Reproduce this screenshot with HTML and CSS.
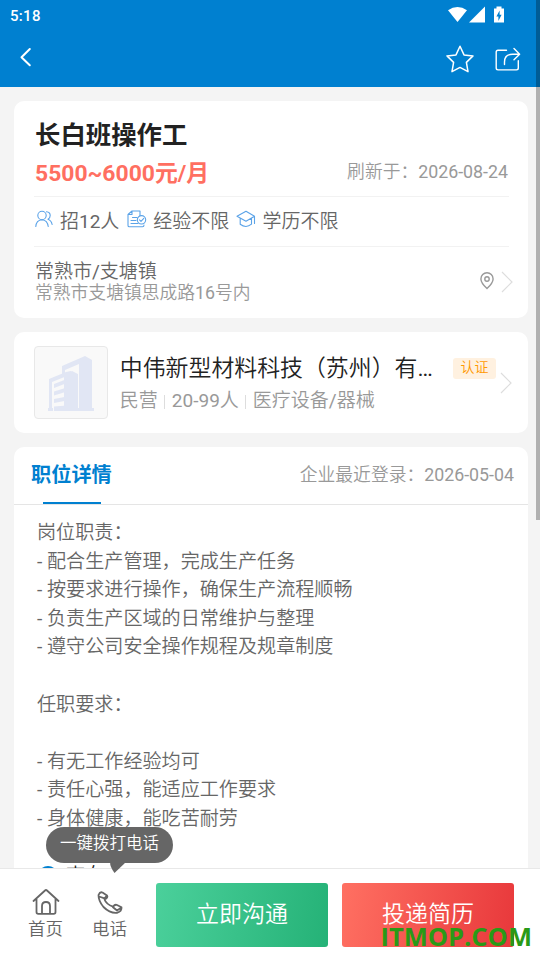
FILE: index.html
```html
<!DOCTYPE html>
<html lang="zh-CN">
<head>
<meta charset="utf-8">
<title>职位详情</title>
<link rel="stylesheet" href="styles.css">
</head>
<body>
<div class="app">
  <header class="header">
    <div class="status">
      <span class="clock">5:18</span>
      <svg class="status-icons" width="58" height="18" viewBox="0 0 58 18" fill="#fff">
        <path d="M0 3.2Q9.500-3.200 19 3.200L9.500 15Z"/>
        <path d="M37 -.5V15.500H21Z"/>
        <path fill-rule="evenodd" d="M48.500-.5h5V1.500H56V15.500H46V1.500h2.500ZM51.600 3.500l-3.200 6h2v4.500l3.200-6.200h-2Z"/>
      </svg>
    </div>
    <div class="nav">
      <svg width="14" height="22" viewBox="0 0 14 22" fill="none" stroke="#fff" stroke-width="2" stroke-linecap="round" stroke-linejoin="round"><path d="M10.800 3L2.500 11.300l8.300 8"/></svg>
      <div class="nav-actions">
        <svg width="28" height="30" viewBox="0 0 28 30" fill="none" stroke="#fff" stroke-width="1.500" stroke-linejoin="round"><path d="M14 2.200l4 8.700 9 1-6.600 6.500 1.600 9.300-8-4.300-8 4.300 1.600-9.300L1 11.900l9-1Z"/></svg>
        <svg width="26" height="26" viewBox="0 0 26 26" fill="none" stroke="#fff" stroke-width="1.400" stroke-linecap="round" stroke-linejoin="round"><path d="M11.500 3.300H3q-1.800 0-1.800 1.800v16q0 1.800 1.800 1.800h18.500q1.800 0 1.800-1.800v-7.300M9.500 17.500V15q0-7.700 8-7.700h7M19 1.500l5.600 5.800-5.600 5.500"/></svg>
      </div>
    </div>
  </header>

  <main class="content">
    <section class="card job">
      <h1 class="job-title">长白班操作工</h1>
      <div class="pay-row"><span class="pay">5500~6000元/月</span><span class="date">刷新于：2026-08-24</span></div>
      <div class="chips">
        <svg width="18" height="18" viewBox="0 0 18 18" class="line-icon"><circle cx="7" cy="5.500" r="4.200"/><path d="M.8 16.500q.4-6.300 6.200-6.800 5.500.5 6.200 6.800M11.500 1.700q3.700.3 3.700 3.800 0 2.500-2.200 3.700 3.500 1.300 4.100 5.300"/></svg>
        <span class="chip c1">招12人</span>
        <svg width="20" height="18" viewBox="0 0 20 18" class="line-icon"><path d="M13 5.500V1H5L1 4.500V15.500Q1 16.800 2.300 16.800H15.500Q17 16.800 17 15M5 1V4.500H1M5.500 7.500h4.500M4 10.500h5M4 13.500h7"/><circle cx="14.500" cy="9.800" r="4.200"/><path d="M12.500 9.800l1.500 1.500 2.800-3"/></svg>
        <span class="chip c2">经验不限</span>
        <svg width="20" height="18" viewBox="0 0 20 18" class="line-icon"><path d="M1 6.200L10 1.200l8.500 5L10 11.200ZM4.200 8v6.200q5.800 4.600 11.300 0V8M18.500 6.200v7.300"/></svg>
        <span class="chip c3">学历不限</span>
      </div>
      <div class="place">
        <div><div class="area">常熟市/支塘镇</div><div class="address">常熟市支塘镇思成路16号内</div></div>
        <div class="place-icons">
          <svg width="14" height="18" viewBox="0 0 14 18" fill="none" stroke="#999" stroke-width="1.400"><path d="M7 16.600Q.9 10.700.9 6.900a6.100 6.100 0 0 1 12.200 0Q13.100 10.700 7 16.600Z"/><circle cx="7" cy="7" r="2.200"/></svg>
          <svg class="arrow" width="12" height="22" viewBox="0 0 12 22"><path d="M1 1l10 10L1 21"/></svg>
        </div>
      </div>
    </section>

    <section class="card company">
      <div class="logo">
        <svg width="48" height="56" viewBox="0 0 48 56"><g fill="#e1e6f4"><path d="M15 21V11L38 1l7 4v48h2v3H17V20l8-4 6 3v34h1V9L18 15v5Z"/><path d="M1 53h1V24l17-7 5-1v40h-4V21L5 27v26h1v3H1Z"/><path d="M7 29l13-5v4L7 33ZM7 36.500l13-4v4L7 40.500ZM7 44l13-2.500v4L7 48ZM7 51.500l13-1V56H7Z"/></g></svg>
      </div>
      <div class="company-info">
        <div class="company-name">中伟新型材料科技（苏州）有…</div>
        <div class="company-meta"><span>民营</span><i></i><span>20-99人</span><i></i><span>医疗设备/器械</span></div>
      </div>
      <span class="tag">认证</span>
      <svg class="arrow" width="12" height="22" viewBox="0 0 12 22"><path d="M1 1l10 10L1 21"/></svg>
    </section>

    <section class="card detail">
      <div class="detail-head"><h2 class="tab">职位详情</h2><span class="login">企业最近登录：2026-05-04</span></div>
      <div class="description">岗位职责：
- 配合生产管理，完成生产任务
- 按要求进行操作，确保生产流程顺畅
- 负责生产区域的日常维护与整理
- 遵守公司安全操作规程及规章制度

任职要求：

- 有无工作经验均可
- 责任心强，能适应工作要求
- 身体健康，能吃苦耐劳</div>
      <div class="contact"><span class="ring"></span><span>李女士</span></div>
    </section>
  </main>

  <footer class="footer">
    <div class="foot-item">
      <svg width="28" height="28" viewBox="0 0 28 28" class="foot-icon"><path d="M1.500 13L13 2.500Q14 1.600 15 2.500L26.500 13M4.500 11v13q0 1.800 1.800 1.800h15.400q1.800 0 1.800-1.800V11M10 25.500V18q0-4 4-4t4 4v7.500"/></svg>
      <span>首页</span>
    </div>
    <div class="foot-item phone">
      <svg width="28" height="28" viewBox="0 0 28 28" class="foot-icon"><path d="M2.500 7Q4 3.500 6.500 4.500L11 7.500Q12.500 9.500 8.500 11.500q2 5 8.500 7.200 2-2.700 4-1.700l4.500 2.200Q26 23.500 21 24.800 14 25.500 7.500 19 2.500 13 2.500 7ZM3 8.500l5.500 1.800 2.500-2.800M17 19.200l4 3.300 4.500-3"/></svg>
      <span>电话</span>
    </div>
    <div class="btn chat">立即沟通</div>
    <div class="btn apply">投递简历</div>
  </footer>
  <div class="tooltip">一键拨打电话<svg class="tip" width="16" height="11" viewBox="0 0 16 11"><path d="M0 0h16L4.500 11Q0 5 0 0Z" fill="#666"/></svg></div>
  <div class="watermark">ITMOP.COM</div>
  <div class="scrollbar"></div>
</div>
</body>
</html>
```
FILE: styles.css
```css
* { box-sizing: border-box; }
body { margin: 0; font-family: Roboto, "Noto Sans CJK SC DemiLight", "Noto Sans CJK SC", sans-serif; color: #666; }
h1, h2 { margin: 0; }
svg { display: block; flex: none; overflow: visible; }
.app { position: relative; width: 540px; height: 960px; overflow: hidden; background: #f4f4f4; display: flex; flex-direction: column; white-space: nowrap; }
.header { height: 87px; flex: none; background: #0080d0; color: #fff; }
.status { height: 32px; padding: 7px 34px 0 10px; display: flex; justify-content: space-between; }
.clock { font-size: 15px; line-height: 18px; font-weight: 500; letter-spacing: .3px; }
.nav { height: 55px; padding: 0 19px; display: flex; justify-content: space-between; align-items: flex-start; }
.nav > svg { margin-top: 14px; }
.nav-actions { display: flex; gap: 21px; padding-top: 12px; }
.nav-actions svg + svg { margin-top: 3px; }
.content { flex: 1; min-height: 0; overflow: hidden; padding: 14px 12px 0 14px; display: flex; flex-direction: column; gap: 14px; }
.card { background: #fff; border-radius: 10px; flex: none; }
.job { height: 217px; padding: 15px 19px 0 20px; }
.job-title { height: 38px; line-height: 38px; padding-left: 1px; font-family: Roboto, "Noto Sans CJK SC", sans-serif; font-size: 25.400px; font-weight: 700; color: #222; }
.pay-row { height: 43px; padding-left: 1px; display: flex; justify-content: space-between; line-height: 40px; border-bottom: 1px solid #f2f2f2; }
.pay { font-family: Roboto, "Noto Sans CJK SC", sans-serif; font-size: 22.900px; font-weight: 700; color: #ff6f61; }
.date { font-size: 17.800px; line-height: 35px; color: #999; margin-right: 1px; }
.chips { height: 50px; padding: 0 0 5px 1px; display: flex; align-items: center; border-bottom: 1px solid #f2f2f2; font-size: 19px; }
.line-icon { fill: none; stroke: #5ba3e8; stroke-width: 1.100; stroke-linejoin: round; stroke-linecap: round; }
.c1 { margin: 0 8px 0 7px; }
.c2 { margin: 0 7px 0 6px; }
.c3 { margin-left: 6px; }
.place { display: flex; justify-content: space-between; padding: 13px 0 0 1px; }
.area { font-size: 19px; line-height: 24px; }
.address { font-size: 17.800px; line-height: 18px; color: #999; }
.place-icons { display: flex; align-items: center; gap: 7px; margin-right: -4px; height: 42px; }
.arrow { fill: none; stroke: #ddd; stroke-width: 1.200; }
.place-icons .arrow { margin-top: 2px; }
.company { height: 101px; padding: 14px 16px 0 20px; display: flex; }
.logo { width: 74px; height: 73px; border: 1px solid #e8e8e8; border-radius: 4px; background: #f9f9f9; display: flex; align-items: center; justify-content: center; }
.company-info { width: 345px; padding: 6px 0 0 12px; }
.company-name { font-size: 22.900px; line-height: 34px; color: #222; }
.company-meta { display: flex; align-items: center; font-size: 19px; line-height: 30px; color: #999; }
.company-meta i { width: 1px; height: 14px; background: #ddd; margin: 2px 7px 0 6px; }
.tag { width: 43px; height: 21px; margin: 12px 0 0 1px; border-radius: 3px; background: #fff1e0; color: #f90; font-size: 14px; line-height: 19px; text-align: center; }
.company .arrow { margin: 26px 0 0 4px; }
.detail { height: 500px; }
.detail-head { height: 58px; border-bottom: 1px solid #e5e5e5; display: flex; justify-content: space-between; padding: 0 14px 0 17px; }
.tab { position: relative; font-family: Roboto, "Noto Sans CJK SC", sans-serif; font-size: 20.200px; line-height: 57px; font-weight: 700; color: #0080d0; }
.tab::after { content: ""; position: absolute; left: 12px; bottom: 0; width: 58px; height: 2px; background: #0080d0; }
.login { font-size: 17.800px; line-height: 56px; color: #999; }
.description { padding: 14px 0 0 23px; font-size: 19.100px; line-height: 28.600px; white-space: pre; }
.contact { display: flex; gap: 8px; padding: 29px 0 0 24px; color: #222; font-size: 19px; line-height: 28px; }
.contact span + span { margin-top: -1px; }
.ring { width: 20px; height: 20px; border: 2px solid #0080d0; border-radius: 50%; margin-top: 3px; }
.footer { height: 92px; flex: none; background: #fff; border-top: 1px solid #e8e8e8; display: flex; padding: 14px 26px 0 13.500px; font-size: 17.500px; }
.foot-item { width: 64px; padding-top: 5px; display: flex; flex-direction: column; align-items: center; line-height: 26px; }
.foot-icon { fill: none; stroke: #666; stroke-width: 1.800; stroke-linecap: round; stroke-linejoin: round; }
.btn { width: 172px; height: 64px; border-radius: 3px; color: #fff; font-size: 23px; line-height: 63px; text-align: center; }
.chat { margin-left: 14.500px; background: linear-gradient(100deg, #4bd09b, #25b277); }
.apply { margin-left: 14px; background: linear-gradient(100deg, #ff7062, #e8383b); }
.tooltip { position: absolute; left: 46px; top: 827px; width: 127px; height: 36px; border-radius: 18px; background: #666; color: #fff; font-size: 16.500px; line-height: 34px; text-align: center; }
.tip { position: absolute; left: 64px; top: 35px; }
.watermark { position: absolute; left: 380.500px; top: 921px; font: 700 25.500px/30px "Open Sans", sans-serif; color: #299a16; }
.scrollbar { position: absolute; right: 0; top: 0; width: 4px; height: 520px; background: rgba(0, 0, 0, .28); }
```
